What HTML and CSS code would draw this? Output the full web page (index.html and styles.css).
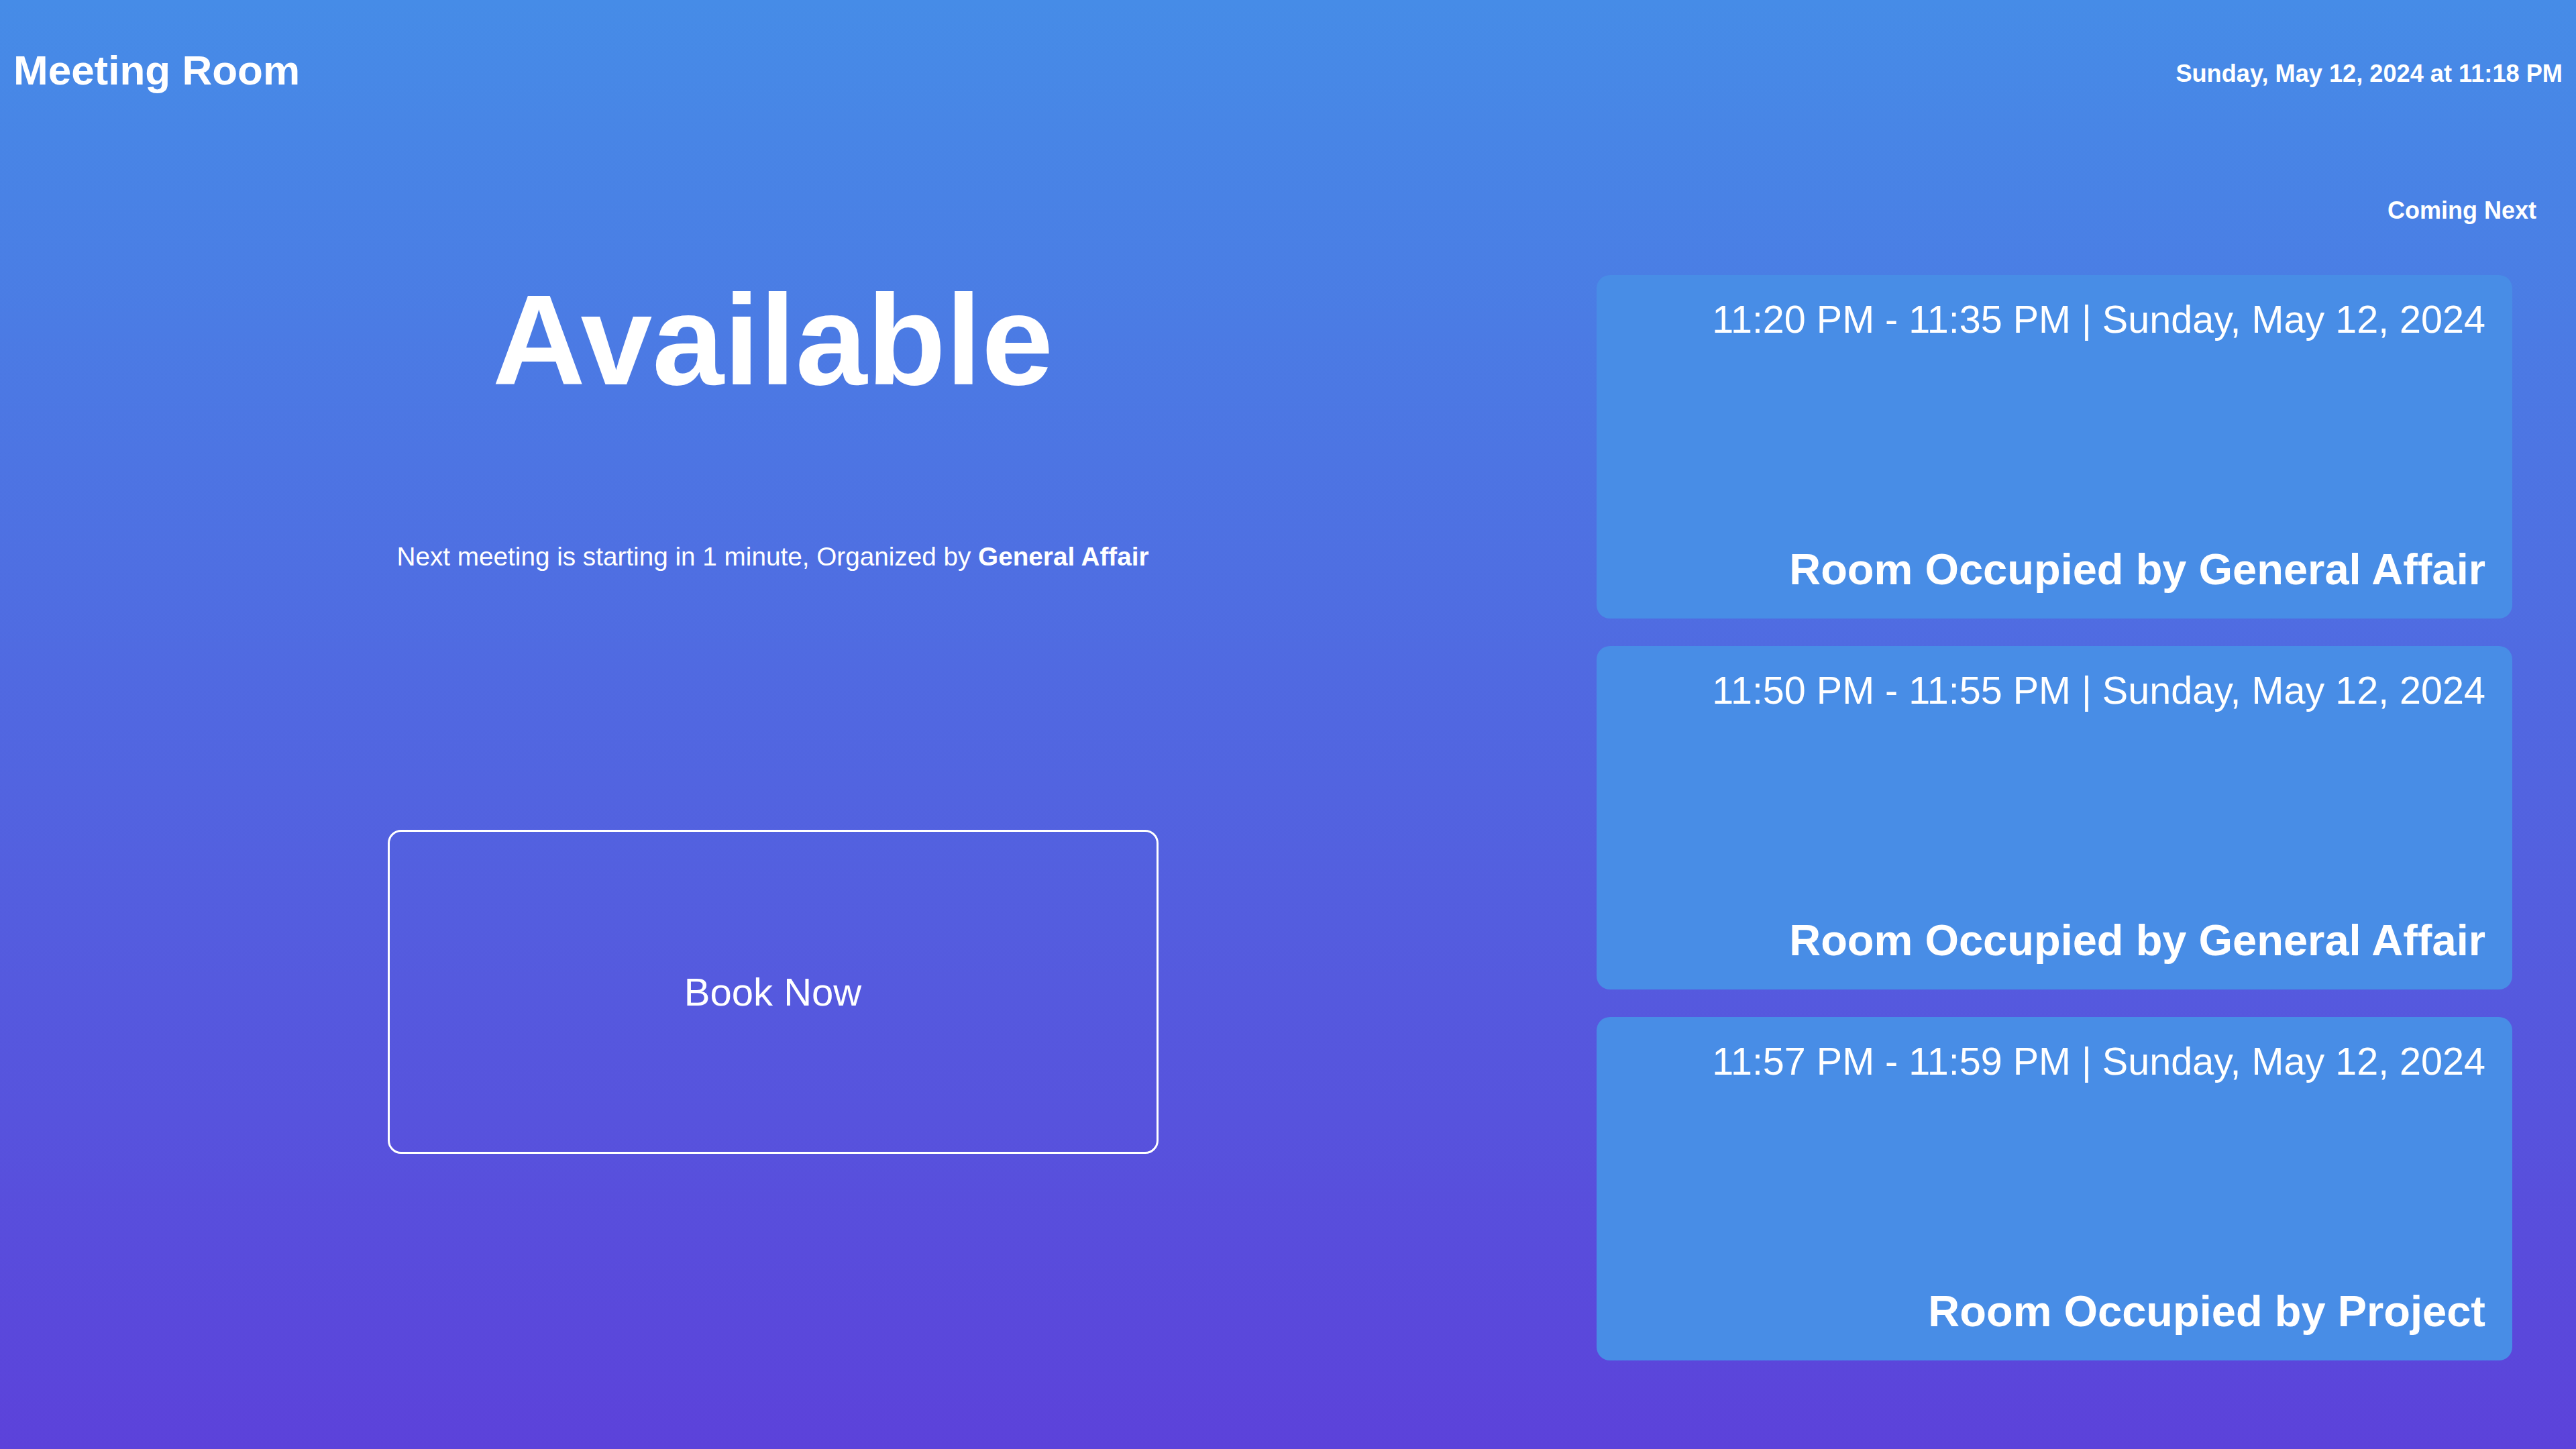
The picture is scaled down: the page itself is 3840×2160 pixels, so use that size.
FILE: index.html
```html
<!DOCTYPE html>
<html lang="en">
<head>
<meta charset="utf-8">
<title>Meeting Room</title>
<link rel="stylesheet" href="styles.css">
</head>
<body>
<div class="page">
  <header class="topbar">
    <h1 class="room-name">Meeting Room</h1>
    <div class="clock">Sunday, May 12, 2024 at 11:18 PM</div>
  </header>
  <main class="content">
    <section class="status">
      <div class="status-title">Available</div>
      <p class="status-note">Next meeting is starting in 1 minute, Organized by <strong>General Affair</strong></p>
      <button class="book-btn" type="button">Book Now</button>
    </section>
    <aside class="schedule">
      <div class="schedule-heading">Coming Next</div>
      <div class="cards">
        <div class="card">
          <div class="card-time">11:20 PM - 11:35 PM | Sunday, May 12, 2024</div>
          <div class="card-title">Room Occupied by General Affair</div>
        </div>
        <div class="card">
          <div class="card-time">11:50 PM - 11:55 PM | Sunday, May 12, 2024</div>
          <div class="card-title">Room Occupied by General Affair</div>
        </div>
        <div class="card">
          <div class="card-time">11:57 PM - 11:59 PM | Sunday, May 12, 2024</div>
          <div class="card-title">Room Occupied by Project</div>
        </div>
      </div>
    </aside>
  </main>
</div>
</body>
</html>
```

FILE: styles.css
```css
* { box-sizing: border-box; }

html, body {
  margin: 0;
  padding: 0;
}

body {
  width: 3840px;
  height: 2160px;
  overflow: hidden;
  font-family: "Liberation Sans", Arial, Helvetica, sans-serif;
  color: #ffffff;
  background: linear-gradient(to bottom, #468ce7 0%, #5c42da 100%);
}

.page {
  width: 3840px;
  height: 2160px;
  display: flex;
  flex-direction: column;
}

.topbar {
  height: 210px;
  padding: 0 20px;
  display: flex;
  align-items: center;
  justify-content: space-between;
}

.room-name {
  margin: 0;
  font-size: 62px;
  font-weight: 700;
  line-height: 1.15;
}

.clock {
  font-size: 36.2px;
  font-weight: 700;
  line-height: 1.15;
  padding-top: 9px;
}

.content {
  display: grid;
  grid-template-columns: 2304px 1536px;
  flex: 1;
}

.status {
  display: flex;
  flex-direction: column;
  align-items: center;
}

.status-title {
  margin-top: 186px;
  font-size: 192px;
  font-weight: 700;
  line-height: 221px;
}

.status-note {
  margin: 190px 0 0;
  font-size: 38.7px;
  line-height: 45px;
}

.status-note strong {
  font-weight: 700;
}

.book-btn {
  margin-top: 385px;
  width: 1149px;
  height: 483px;
  border: 3px solid #ffffff;
  border-radius: 20px;
  background: transparent;
  color: #ffffff;
  font-family: "Liberation Sans", Arial, Helvetica, sans-serif;
  font-size: 58px;
  padding: 0;
}

.schedule {
  display: flex;
  flex-direction: column;
}

.schedule-heading {
  margin-top: 83px;
  padding-right: 59px;
  text-align: right;
  font-size: 36px;
  font-weight: 700;
  line-height: 41px;
}

.cards {
  margin-top: 76px;
  margin-left: 76px;
  width: 1365px;
  display: flex;
  flex-direction: column;
  gap: 41px;
}

.card {
  height: 512px;
  border-radius: 20px;
  background: #488de6;
  padding: 33px 40px 35px;
  display: flex;
  flex-direction: column;
  justify-content: space-between;
  align-items: flex-end;
  text-align: right;
}

.card-time {
  font-size: 57.5px;
  line-height: 1.15;
}

.card-title {
  font-size: 65px;
  font-weight: 700;
  line-height: 1.15;
}
```
